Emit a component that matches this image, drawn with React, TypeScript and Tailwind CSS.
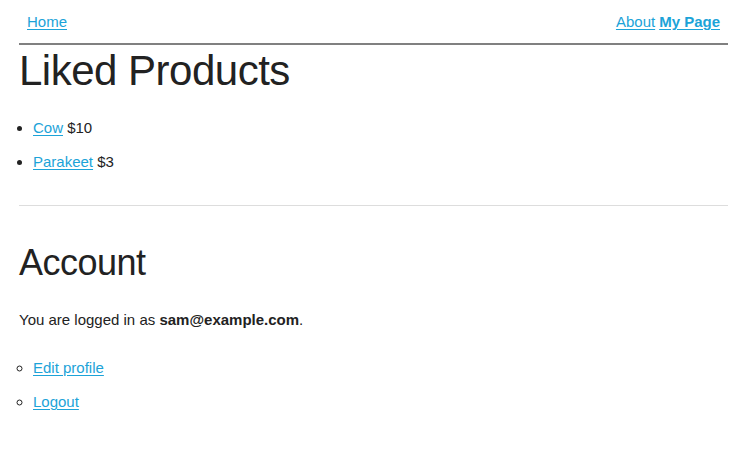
export default function App() {
  const linkCls = "text-[#1ca3d8] underline underline-offset-2";

  return (
    <div className="min-h-screen bg-white pl-[19px] pr-[16px] font-['Liberation_Sans',Arial,sans-serif] text-[15px] text-[#222]">
      {/* top nav */}
      <nav className="flex items-center justify-between border-b-2 border-[#808080] px-2 pt-3 pb-[11px] leading-5">
        <a href="#" className={linkCls}>
          Home
        </a>
        <div className="flex gap-1">
          <a href="#" className={linkCls}>
            About
          </a>
          <a href="#" className={linkCls + " font-bold"}>
            My Page
          </a>
        </div>
      </nav>

      {/* liked products */}
      <h1 className="mt-[5px] text-[42px] leading-none font-normal tracking-[-0.5px]">
        Liked Products
      </h1>
      <ul className="mt-[26px] list-disc pl-[14px] leading-5">
        <li className="mb-[14px]">
          <a href="#" className={linkCls}>
            Cow
          </a>{" "}
          $10
        </li>
        <li>
          <a href="#" className={linkCls}>
            Parakeet
          </a>{" "}
          $3
        </li>
      </ul>

      <hr className="mt-[33px] border-t border-[#dddddd]" />

      {/* account */}
      <h2 className="mt-[39px] text-[36px] leading-none font-normal tracking-[-0.5px]">
        Account
      </h2>
      <p className="mt-[29px] leading-5">
        You are logged in as <b>sam@example.com</b>.
      </p>
      <ul className="mt-[28px] list-[circle] pl-[14px] leading-5">
        <li className="mb-[14px]">
          <a href="#" className={linkCls}>
            Edit profile
          </a>
        </li>
        <li>
          <a href="#" className={linkCls}>
            Logout
          </a>
        </li>
      </ul>
    </div>
  );
}
